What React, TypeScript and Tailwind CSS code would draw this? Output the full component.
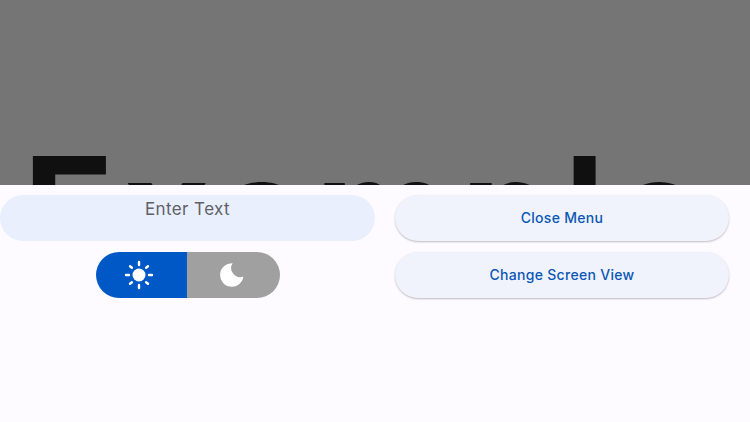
import React from "react";

function SunIcon() {
  return (
    <svg width="30" height="30" viewBox="0 0 30 30" fill="none">
      <circle cx="15" cy="15" r="6.500" fill="#fff" />
      <g stroke="#fff" strokeWidth="2.400" strokeLinecap="round">
        <path d="M15 2v3" />
        <path d="M15 25v3" />
        <path d="M2 15h3" />
        <path d="M25 15h3" />
        <path d="M6 6.200l1.900 1.500" />
        <path d="M22.100 22.300l1.900 1.500" />
        <path d="M6 23.800l1.900-1.500" />
        <path d="M22.100 7.700l1.900-1.500" />
      </g>
    </svg>
  );
}

function MoonIcon() {
  return (
    <svg width="24" height="24" viewBox="0 0 24 24" fill="none">
      <path d="M12.600 .3A11.700 11.700 0 1 0 23.400 13.500A9 9 0 0 1 12.600 .3z" fill="#fff" />
    </svg>
  );
}

export default function App() {
  return (
    <div className="w-[750px] h-[422px] overflow-hidden flex flex-col bg-[#fdfbff] font-['Inter',sans-serif]">
      {/* Dimmed page behind the sheet */}
      <div className="h-[185px] shrink-0 overflow-hidden bg-[#757575] pt-[111px] pl-[23px]">
        <div className="text-[150px] leading-[200px] font-bold tracking-[9px] text-[#101010] whitespace-nowrap">Example</div>
      </div>

      <div className="flex-1 flex pt-[10px]">
        {/* Left column */}
        <div className="w-[375px] flex flex-col items-center gap-[11px]">
          <div className="w-full h-[46px] rounded-[23px] bg-[#e9effd] text-center text-[17px] leading-[28px] tracking-[0.4px] text-[#5f6168]">
            Enter Text
          </div>
          <div className="w-[184px] h-[46px] rounded-[23px] overflow-hidden flex">
            <div className="w-[91px] flex items-center justify-center pr-[5px] bg-[#0058c6]">
              <SunIcon />
            </div>
            <div className="flex-1 flex items-center justify-center pr-[3px] bg-[#a0a0a0]">
              <MoonIcon />
            </div>
          </div>
        </div>

        {/* Right column */}
        <div className="w-[375px] flex flex-col items-start gap-[11px] pl-[20px]">
          <button className="w-[334px] h-[46px] pb-[1px] rounded-[23px] bg-[#f0f3fc] shadow-[0_1px_2px_rgba(0,0,0,0.25)] text-[14px] font-medium tracking-[0.3px] text-[#0b57b5]">
            Close Menu
          </button>
          <button className="w-[334px] h-[46px] pb-[1px] rounded-[23px] bg-[#f0f3fc] shadow-[0_1px_2px_rgba(0,0,0,0.25)] text-[14px] font-medium tracking-[0.3px] text-[#0b57b5]">
            Change Screen View
          </button>
        </div>
      </div>
    </div>
  );
}
